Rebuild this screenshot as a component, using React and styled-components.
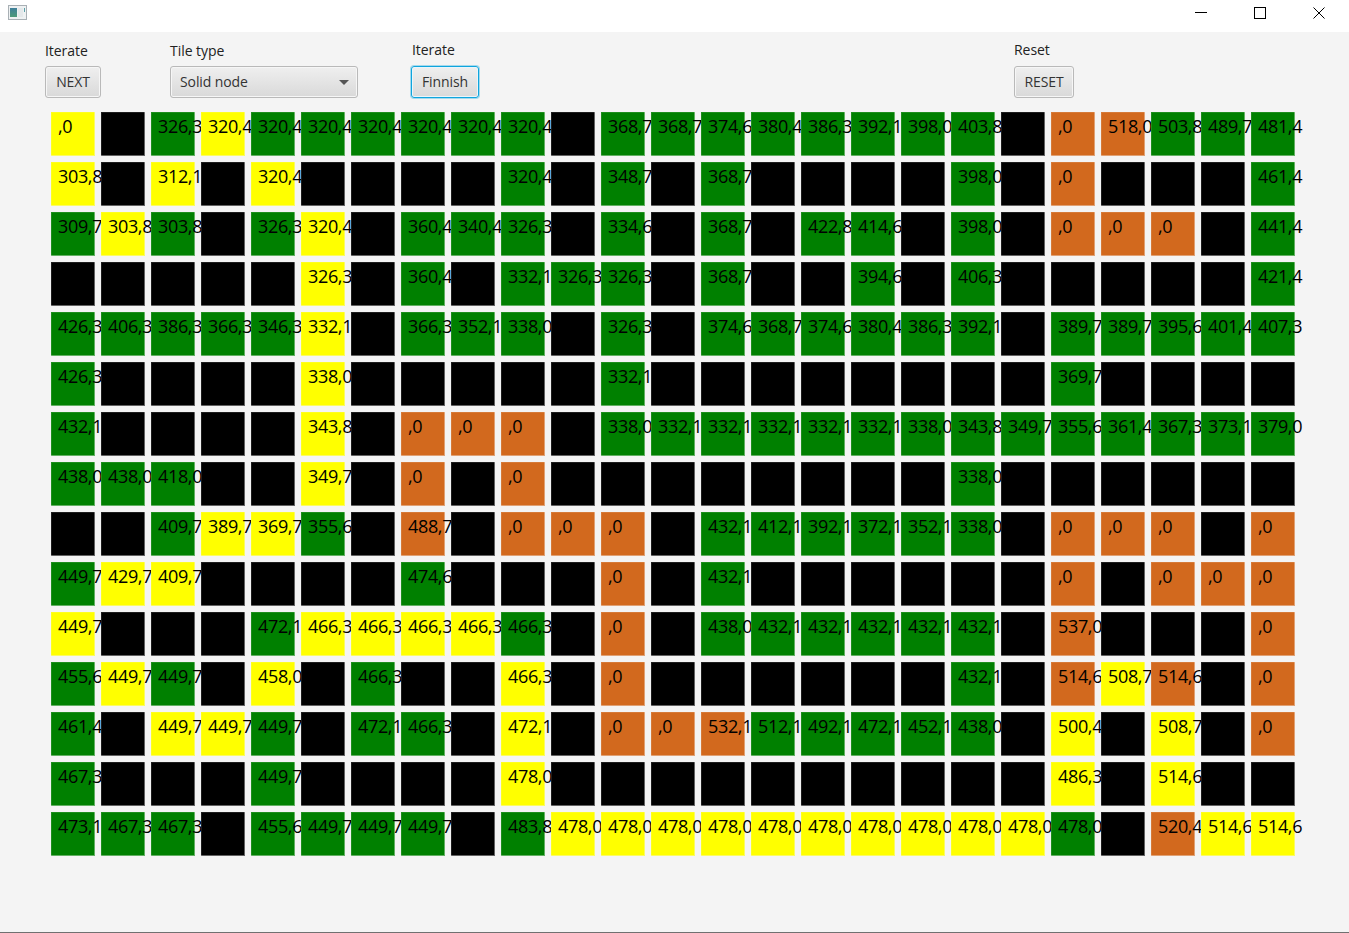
import React from "react";
import styled, { createGlobalStyle } from "styled-components";

const GlobalStyle = createGlobalStyle`
  html, body {
    margin: 0;
    height: 100%;
    background: #f4f4f4;
  }
  body {
    font-family: "Open Sans", "Liberation Sans", sans-serif;
  }
`;

const Window = styled.div`
  height: 100vh;
  display: flex;
  flex-direction: column;
  box-sizing: border-box;
`;

const TitleBar = styled.header`
  height: 32px;
  flex: none;
  background: #fff;
  display: flex;
  align-items: center;
  justify-content: space-between;
  padding: 0 1px 0 8px;
`;

const WindowButtons = styled.div`
  display: flex;
  gap: 1px;
`;

const WindowButton = styled.div`
  width: 58px;
  height: 26px;
  margin-bottom: 6px;
  display: flex;
  align-items: center;
  justify-content: center;
`;

const Content = styled.main`
  flex: 1;
  background: #f4f4f4;
  border-bottom: 1px solid #707070;
  padding: 9px 0 0 45px;
`;

const Toolbar = styled.div`
  display: flex;
  height: 57px;
  align-items: flex-end;
`;

const Field = styled.div`
  width: ${(p) => p.$width}px;
  flex: none;
  display: flex;
  flex-direction: column;
  align-items: flex-start;
  gap: ${(p) => p.$gap || 6}px;
`;

const Label = styled.label`
  font-size: 14px;
  line-height: 19px;
  color: #222;
  letter-spacing: -0.05px;
  margin-left: ${(p) => p.$indent || 0}px;
`;

const Button = styled.button`
  box-sizing: border-box;
  height: 32px;
  width: ${(p) => p.$width}px;
  padding: 0 0 2px;
  font-family: inherit;
  font-size: 14px;
  color: #333;
  letter-spacing: -0.1px;
  background: linear-gradient(#efefef, #d9d9d9);
  border: 1px solid ${(p) => (p.$focused ? "#0fa5de" : "#b9b9b9")};
  border-radius: 3px;
  box-shadow: ${(p) =>
    p.$focused
      ? "0 0 0 1px rgba(15, 165, 222, 0.35), inset 0 0 0 1px #eaf5fa"
      : "inset 0 0 0 1px #f6f6f6"};
`;

const Combo = styled(Button)`
  display: flex;
  align-items: center;
  justify-content: space-between;
  padding: 0 8px 2px 9px;
`;

const Caret = styled.span`
  width: 0;
  height: 0;
  margin-top: 2px;
  border-left: 5px solid transparent;
  border-right: 5px solid transparent;
  border-top: 5px solid #555;
`;

const Board = styled.div`
  display: grid;
  grid-template-columns: repeat(25, 50px);
  grid-auto-rows: 50px;
  margin: 14px 0 0 6px;
`;

const Slot = styled.div`
  overflow: hidden;
  height: 44px;
  width: ${(p) => (p.$last ? "60px" : "50px")};
`;

const tileColors = {
  y: "#ffff00",
  g: "#008000",
  o: "#d2691e",
  b: "#000000",
};

const Tile = styled.div`
  box-sizing: border-box;
  width: 44px;
  height: 44px;
  padding: 2px 0 0 7px;
  background: ${(p) => tileColors[p.$kind]};
  box-shadow: inset -1px -1px 0 rgba(244, 244, 244, 0.4),
    inset 1px 1px 0 rgba(244, 244, 244, 0.12);
  color: #000;
  font-size: 18px;
  line-height: 24px;
  letter-spacing: -0.35px;
  white-space: nowrap;
`;

// one token per tile: first letter is the kind, the rest is the label
const rows = [
  "y,0 b g326,3 y320,4 g320,4 g320,4 g320,4 g320,4 g320,4 g320,4 b g368,7 g368,7 g374,6 g380,4 g386,3 g392,1 g398,0 g403,8 b o,0 o518,0 g503,8 g489,7 g481,4",
  "y303,8 b y312,1 b y320,4 b b b b g320,4 b g348,7 b g368,7 b b b b g398,0 b o,0 b b b g461,4",
  "g309,7 y303,8 g303,8 b g326,3 y320,4 b g360,4 g340,4 g326,3 b g334,6 b g368,7 b g422,8 g414,6 b g398,0 b o,0 o,0 o,0 b g441,4",
  "b b b b b y326,3 b g360,4 b g332,1 g326,3 g326,3 b g368,7 b b g394,6 b g406,3 b b b b b g421,4",
  "g426,3 g406,3 g386,3 g366,3 g346,3 y332,1 b g366,3 g352,1 g338,0 b g326,3 b g374,6 g368,7 g374,6 g380,4 g386,3 g392,1 b g389,7 g389,7 g395,6 g401,4 g407,3",
  "g426,3 b b b b y338,0 b b b b b g332,1 b b b b b b b b g369,7 b b b b",
  "g432,1 b b b b y343,8 b o,0 o,0 o,0 b g338,0 g332,1 g332,1 g332,1 g332,1 g332,1 g338,0 g343,8 g349,7 g355,6 g361,4 g367,3 g373,1 g379,0",
  "g438,0 g438,0 g418,0 b b y349,7 b o,0 b o,0 b b b b b b b b g338,0 b b b b b b",
  "b b g409,7 y389,7 y369,7 g355,6 b o488,7 b o,0 o,0 o,0 b g432,1 g412,1 g392,1 g372,1 g352,1 g338,0 b o,0 o,0 o,0 b o,0",
  "g449,7 y429,7 y409,7 b b b b g474,6 b b b o,0 b g432,1 b b b b b b o,0 b o,0 o,0 o,0",
  "y449,7 b b b g472,1 y466,3 y466,3 y466,3 y466,3 g466,3 b o,0 b g438,0 g432,1 g432,1 g432,1 g432,1 g432,1 b o537,0 b b b o,0",
  "g455,6 y449,7 g449,7 b y458,0 b g466,3 b b y466,3 b o,0 b b b b b b g432,1 b o514,6 y508,7 o514,6 b o,0",
  "g461,4 b y449,7 y449,7 g449,7 b g472,1 g466,3 b y472,1 b o,0 o,0 o532,1 g512,1 g492,1 g472,1 g452,1 g438,0 b y500,4 b y508,7 b o,0",
  "g467,3 b b b g449,7 b b b b y478,0 b b b b b b b b b b y486,3 b y514,6 b b",
  "g473,1 g467,3 g467,3 b g455,6 g449,7 g449,7 g449,7 b g483,8 y478,0 y478,0 y478,0 y478,0 y478,0 y478,0 y478,0 y478,0 y478,0 y478,0 g478,0 b o520,4 y514,6 y514,6",
];

const AppIcon = () => (
  <svg width="19" height="15" viewBox="0 0 19 15" style={{ display: "block", marginBottom: 8 }}>
    <defs>
      <linearGradient id="pane" x1="0" y1="0" x2="0" y2="1">
        <stop offset="0" stopColor="#3f7f9a" />
        <stop offset="1" stopColor="#4d9a78" />
      </linearGradient>
    </defs>
    <rect x="0.5" y="0.5" width="18" height="14" fill="#eef1f2" stroke="#a9b0b5" />
    <rect x="2" y="3" width="7" height="9" fill="url(#pane)" />
    <rect x="10" y="3" width="5" height="9" fill="#e4e8ea" />
    <rect x="16" y="3" width="1" height="4" fill="#5aa0a8" />
  </svg>
);

const MinimizeIcon = () => (
  <svg width="12" height="12" viewBox="0 0 12 12">
    <path d="M0 5.5H12" stroke="#000" fill="none" />
  </svg>
);

const MaximizeIcon = () => (
  <svg width="12" height="12" viewBox="0 0 12 12">
    <rect x="0.5" y="0.5" width="11" height="11" stroke="#000" fill="none" />
  </svg>
);

const CloseIcon = () => (
  <svg width="12" height="12" viewBox="0 0 12 12">
    <path d="M0.5 0.5L11.5 11.5M11.5 0.5L0.5 11.5" stroke="#000" fill="none" />
  </svg>
);

export default function App() {
  return (
    <Window>
      <GlobalStyle />
      <TitleBar>
        <AppIcon />
        <WindowButtons>
          <WindowButton>
            <MinimizeIcon />
          </WindowButton>
          <WindowButton>
            <MaximizeIcon />
          </WindowButton>
          <WindowButton>
            <CloseIcon />
          </WindowButton>
        </WindowButtons>
      </TitleBar>
      <Content>
        <Toolbar>
          <Field $width={125}>
            <Label>Iterate</Label>
            <Button $width={56}>NEXT</Button>
          </Field>
          <Field $width={241}>
            <Label>Tile type</Label>
            <Combo as="div" $width={188}>
              Solid node
              <Caret />
            </Combo>
          </Field>
          <Field $width={603} $gap={7}>
            <Label $indent={1}>Iterate</Label>
            <Button $width={68} $focused>
              Finnish
            </Button>
          </Field>
          <Field $width={60} $gap={7}>
            <Label>Reset</Label>
            <Button $width={60}>RESET</Button>
          </Field>
        </Toolbar>
        <Board>
          {rows.flatMap((row, r) =>
            row.split(" ").map((token, c) => (
              <Slot key={`${r}-${c}`} $last={c === 24}>
                <Tile $kind={token[0]}>{token.slice(1)}</Tile>
              </Slot>
            ))
          )}
        </Board>
      </Content>
    </Window>
  );
}
